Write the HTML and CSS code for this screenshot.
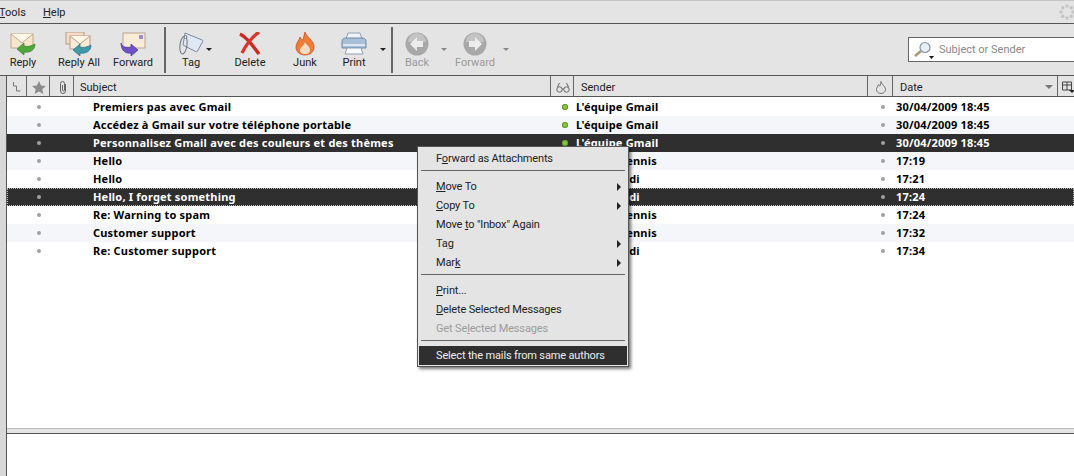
FILE: index.html
```html
<!DOCTYPE html>
<html>
<head>
    <title>Inbox</title>
    <link rel="stylesheet" href="styles.css">
</head>
<body>
    <!-- menu bar -->
    <div class="menubar">
        <span class="menu-tools"><u>T</u>ools</span>
        <span class="menu-help"><u>H</u>elp</span>
        <svg class="spinner" width="16" height="16" viewBox="0 0 16 16">
            <g fill="#c4c4c4">
                <circle cx="8" cy="2" r="1.8"/><circle cx="12.3" cy="3.7" r="1.8"/><circle cx="14" cy="8" r="1.8"/>
                <circle cx="12.3" cy="12.3" r="1.8"/><circle cx="8" cy="14" r="1.8"/><circle cx="3.7" cy="12.3" r="1.8"/>
                <circle cx="2" cy="8" r="1.8"/><circle cx="3.7" cy="3.7" r="1.8"/>
            </g>
        </svg>
    </div>

    <!-- toolbar -->
    <div class="toolbar">
        <div class="tool w-reply">
            <svg width="26" height="24" viewBox="0 0 26 24">
                <rect x="1" y="2" width="22" height="14" fill="#f6e6cc" stroke="#c2a98c"/>
                <path d="M1 2l11 9 11-9" fill="#fff6e6" stroke="#c2a98c"/>
                <path d="M25 12c0 6-5 9-11 8v3l-7-6 7-6v3c4 1 7 0 11-2z" fill="#4fa83a" stroke="#2f7d26" stroke-width=".7"/>
            </svg>
            <span>Reply</span>
        </div>
        <div class="tool w-replyall">
            <svg width="28" height="24" viewBox="0 0 28 24">
                <rect x="1" y="0" width="18" height="12" fill="#f4dcc8" stroke="#b89a86"/>
                <rect x="5" y="4" width="20" height="13" fill="#f8ecd8" stroke="#b89a86"/>
                <path d="M5 4l10 8 10-8" fill="#fff6e6" stroke="#b89a86"/>
                <path d="M26 13c0 6-5 9-11 8v3l-7-6 7-6v3c4 1 7 0 11-2z" fill="#3f9aa8" stroke="#28707c" stroke-width=".7"/>
            </svg>
            <span>Reply All</span>
        </div>
        <div class="tool w-forward">
            <svg width="26" height="24" viewBox="0 0 26 24">
                <rect x="3" y="1" width="22" height="15" fill="#f6ecd8" stroke="#b8a68e"/>
                <rect x="19" y="3" width="4" height="4" fill="#9c8cc8"/>
                <path d="M1 11c1 4 5 5 10 4v-3l7 6-7 6v-3c-6 1-10-3-10-10z" fill="#6f52c4" stroke="#4a3596" stroke-width=".7"/>
            </svg>
            <span>Forward</span>
        </div>
        <div class="tool-sep sep-first"></div>
        <div class="tool w-tag">
            <svg width="26" height="24" viewBox="0 0 26 24">
                <path d="M7 1l17 7c1 .5 1 1 .5 2l-5 9c-.5 1-1 1-2 .5L5 13z" fill="#dfe8f4" stroke="#7c8a9c"/>
                <ellipse cx="5.500" cy="13" rx="3.500" ry="9" fill="none" stroke="#6a7480" transform="rotate(8 5.500 13)"/>
                <circle cx="7.500" cy="5" r="1.400" fill="#fff" stroke="#6a7480"/>
            </svg>
            <span>Tag</span>
        </div>
        <div class="caret caret-tag"></div>
        <div class="tool w-delete">
            <svg width="22" height="24" viewBox="0 0 22 24">
                <path d="M1 2c6 3 10 8 19 20" fill="none" stroke="#c92a22" stroke-width="3.400"/>
                <path d="M20 0C13 5 8 11 3 21" fill="none" stroke="#d8362c" stroke-width="3.400"/>
            </svg>
            <span>Delete</span>
        </div>
        <div class="tool w-junk">
            <svg width="20" height="24" viewBox="0 0 20 24">
                <path d="M10 0c1 5 9 8 9 15 0 5-4 8-9 8s-9-3-9-8c0-4 3-6 4-10 1 2 2 3 3 3 1-3 1-5 2-8z" fill="#ef7d3a" stroke="#c9501e" stroke-width=".8"/>
                <path d="M10 10c1 3 5 4 5 8 0 3-2 4-5 4s-5-1-5-4c0-3 4-4 5-8z" fill="#fbdcc0"/>
            </svg>
            <span>Junk</span>
        </div>
        <div class="tool w-print">
            <svg width="26" height="24" viewBox="0 0 26 24">
                <path d="M7 1h12l2 6H5z" fill="#eef3f8" stroke="#8fa0b4"/>
                <path d="M1 9c0-2 2-3 4-3h16c2 0 4 1 4 3v7H1z" fill="#a9bfd8" stroke="#6f88a6"/>
                <path d="M2 13h22" stroke="#dfe8f2" stroke-width="2"/>
                <path d="M6 16h14l2 6H4z" fill="#f7f9fb" stroke="#8fa0b4"/>
            </svg>
            <span>Print</span>
        </div>
        <div class="caret caret-print"></div>
        <div class="tool-sep"></div>
        <div class="tool w-back disabled">
            <svg width="24" height="24" viewBox="0 0 24 24">
                <circle cx="12" cy="12" r="11.500" fill="#a8a8a8"/>
                <path d="M3 10a9 9 0 0 1 18 0z" fill="#c4c4c4"/>
                <path d="M12 5l-7 7 7 7v-4h6V9h-6z" fill="#ececec"/>
            </svg>
            <span>Back</span>
        </div>
        <div class="caret caret-back"></div>
        <div class="tool w-next disabled">
            <svg width="24" height="24" viewBox="0 0 24 24">
                <circle cx="12" cy="12" r="11.500" fill="#a8a8a8"/>
                <path d="M3 10a9 9 0 0 1 18 0z" fill="#c4c4c4"/>
                <path d="M12 5l7 7-7 7v-4H6V9h6z" fill="#ececec"/>
            </svg>
            <span>Forward</span>
        </div>
        <div class="caret caret-next"></div>
        <div class="search">
            <svg width="20" height="18" viewBox="0 0 20 18">
                <path d="M1 15l6-5" stroke="#a89a78" stroke-width="2.600"/>
                <circle cx="11" cy="6.500" r="5" fill="#e6eef6" stroke="#8a94a0" stroke-width="1.200"/>
                <path d="M15 15h5l-2.500 3z" fill="#111"/>
            </svg>
            <span>Subject or Sender</span>
        </div>
    </div>

    <!-- main area -->
    <div class="main">
        <div class="sidebar"></div>
        <div class="panes">
            <div class="list">
                <div class="head">
                    <div class="hcell h-thread">
                        <svg width="10" height="12" viewBox="0 0 10 12"><path d="M1.500 1v4h3v5h4" fill="none" stroke="#777"/></svg>
                    </div>
                    <div class="hcell h-star">
                        <svg width="14" height="13" viewBox="0 0 16 15"><path d="M8 0l2.400 5.200 5.600.6-4.200 3.800 1.200 5.400L8 12.200 3 15l1.200-5.400L0 5.800l5.600-.6z" fill="#8c8c8c"/></svg>
                    </div>
                    <div class="hcell h-clip">
                        <svg width="8" height="15" viewBox="0 0 8 15"><path d="M6.500 4v7a2.500 2.500 0 0 1-5 0V3.500a2 2 0 0 1 4 0V10a1 1 0 0 1-2 0V5" fill="none" stroke="#666"/></svg>
                    </div>
                    <div class="hcell h-subject">Subject</div>
                    <div class="hcell h-glass">
                        <svg width="14" height="11" viewBox="0 0 14 11"><g fill="none" stroke="#666"><circle cx="3.500" cy="7.500" r="2.700"/><circle cx="10.500" cy="7.500" r="2.700"/><path d="M6 7h2M1.500 5l2-4M12.500 5l-2-4"/></g></svg>
                    </div>
                    <div class="hcell h-sender">Sender</div>
                    <div class="hcell h-fire">
                        <svg width="10" height="13" viewBox="0 0 10 13"><path d="M5 .5c.5 3 4.500 4.500 4.500 8 0 2.500-2 4-4.500 4s-4.500-1.500-4.500-4c0-2 1.500-3 2-5 .5 1 1 1.500 1.500 1.500.5-1.500.5-3 1-4.500z" fill="none" stroke="#777"/></svg>
                    </div>
                    <div class="hcell h-date">Date<i class="sort"></i></div>
                    <div class="hcell h-pick">
                        <svg width="13" height="12" viewBox="0 0 13 12"><path d="M.5 1h9v8h-9zM.5 4h9M5 1v8" fill="none" stroke="#444"/><path d="M7 9h6l-3 3z" fill="#222"/></svg>
                    </div>
                </div>
                <div class="row"><i class="dot"></i><b>Premiers pas avec Gmail</b><i class="dot green"></i><b>L'équipe Gmail</b><i class="dot"></i><b>30/04/2009 18:45</b></div>
                <div class="row alt"><i class="dot"></i><b>Accédez à Gmail sur votre téléphone portable</b><i class="dot green"></i><b>L'équipe Gmail</b><i class="dot"></i><b>30/04/2009 18:45</b></div>
                <div class="row sel"><i class="dot"></i><b>Personnalisez Gmail avec des couleurs et des thèmes</b><i class="dot green"></i><b>L'équipe Gmail</b><i class="dot"></i><b>30/04/2009 18:45</b></div>
                <div class="row alt"><i class="dot"></i><b>Hello</b><i class="dot green"></i><b>Dennis Dennis</b><i class="dot"></i><b>17:19</b></div>
                <div class="row"><i class="dot"></i><b>Hello</b><i class="dot green"></i><b>Fred Freddi</b><i class="dot"></i><b>17:21</b></div>
                <div class="row sel focus"><i class="dot"></i><b>Hello, I forget something</b><i class="dot green"></i><b>Fred Freddi</b><i class="dot"></i><b>17:24</b></div>
                <div class="row"><i class="dot"></i><b>Re: Warning to spam</b><i class="dot green"></i><b>Dennis Dennis</b><i class="dot"></i><b>17:24</b></div>
                <div class="row alt"><i class="dot"></i><b>Customer support</b><i class="dot green"></i><b>Dennis Dennis</b><i class="dot"></i><b>17:32</b></div>
                <div class="row"><i class="dot"></i><b>Re: Customer support</b><i class="dot green"></i><b>Fred Freddi</b><i class="dot"></i><b>17:34</b></div>
            </div>
            <div class="splitter"></div>
            <div class="preview"></div>
        </div>
    </div>

    <!-- context menu -->
    <div class="ctx">
        <div class="item">F<u>o</u>rward as Attachments</div>
        <div class="ctx-sep"></div>
        <div class="item sub"><u>M</u>ove To</div>
        <div class="item sub"><u>C</u>opy To</div>
        <div class="item">Move <u>t</u>o "Inbox" Again</div>
        <div class="item sub">Ta<u>g</u></div>
        <div class="item sub">Mar<u>k</u></div>
        <div class="ctx-sep"></div>
        <div class="item"><u>P</u>rint...</div>
        <div class="item"><u>D</u>elete Selected Messages</div>
        <div class="item off">Get Se<u>l</u>ected Messages</div>
        <div class="ctx-sep sep-last"></div>
        <div class="item active">Select the mails from same authors</div>
    </div>
</body>
</html>
```

FILE: styles.css
```css
/* greys from the app theme */
:root {
    --panel: #e4e4e4;
    --line: #555555;
    --sel: #2f2f2f;
}

html, body {
    height: 100%;
}

body {
    margin: 0;
    height: 476px;
    overflow: hidden;
    position: relative;
    display: flex;
    flex-direction: column;
    background-color: var(--panel);
    color: #222;
    font-family: Roboto, sans-serif;
    font-size: 11px;
}

/* menu bar */
.menubar {
    height: 24px;
    box-sizing: border-box;
    border-top: 1px solid #c4c4c4;
    border-bottom: 1px solid var(--line);
    display: flex;
    align-items: center;
    position: relative;
}

.menu-tools {
    margin-left: -1px;
}

.menu-help {
    margin-left: 17px;
}

.spinner {
    margin-left: auto;
    margin-right: -1px;
}

/* toolbar */
.toolbar {
    height: 52px;
    box-sizing: border-box;
    border-bottom: 1px solid var(--line);
    display: flex;
    align-items: flex-start;
}

.tool {
    display: flex;
    flex-direction: column;
    align-items: center;
    height: 51px;
    padding-top: 8px;
    box-sizing: border-box;
    flex: none;
}

.tool svg {
    display: block;
}

.tool span {
    line-height: 14px;
}

.disabled span {
    color: #9a9a9a;
}

.w-reply { width: 46px; }
.w-replyall { width: 66px; }
.w-forward { width: 42px; }
.w-tag { width: 30px; margin-left: 10px; }
.w-delete { width: 68px; margin-left: 4px; }
.w-junk { width: 42px; }
.w-print { width: 56px; }
.w-back { width: 30px; margin-left: 9px; }
.w-next { width: 50px; }

.tool-sep {
    width: 2px;
    height: 46px;
    margin-top: 3px;
    background-color: #666;
    flex: none;
}

.sep-first {
    margin-left: 10px;
}

.caret {
    width: 0;
    height: 0;
    margin-top: 24px;
    border: 3px solid transparent;
    border-top-color: #222;
    border-bottom-width: 0;
    flex: none;
}

.caret-print { margin-left: -2px; margin-right: 5px; }
.caret-back { margin-left: 9px; margin-right: 3px; border-top-color: #888; }
.caret-next { margin-left: 3px; border-top-color: #888; }

.search {
    width: 175px;
    height: 25px;
    margin-top: 13px;
    margin-left: auto;
    margin-right: -9px;
    box-sizing: border-box;
    background-color: #fff;
    border: 1px solid #666;
    border-right: none;
    display: flex;
    align-items: center;
    padding-left: 5px;
    gap: 5px;
    color: #888;
    flex: none;
}

/* main area */
.main {
    flex: 1;
    display: flex;
    min-height: 0;
}

.sidebar {
    width: 6px;
    flex: none;
    background-color: #d8d8d8;
}

.panes {
    flex: 1;
    display: flex;
    flex-direction: column;
    min-width: 0;
    border-left: 1px solid var(--line);
}

.list {
    height: 352px;
    flex: none;
    background-color: #fff;
    overflow: hidden;
}

.head {
    height: 21px;
    box-sizing: border-box;
    margin-bottom: 1px;
    border-bottom: 1px solid var(--line);
    background-color: var(--panel);
    display: flex;
}

.hcell {
    flex: none;
    box-sizing: border-box;
    display: flex;
    align-items: center;
    justify-content: center;
    border-right: 1px solid #666;
    margin-right: 2px;
    padding-top: 2px;
}

.h-thread { width: 19px; margin-left: 1px; }
.h-star { width: 21px; }
.h-clip { width: 22px; }
.h-subject { width: 475px; justify-content: flex-start; padding-left: 4px; }
.h-glass { width: 21px; }
.h-sender { width: 292px; justify-content: flex-start; padding-left: 5px; }
.h-fire { width: 23px; }
.h-date { width: 163px; justify-content: flex-start; padding-left: 5px; }
.h-pick { width: 20px; border-right: none; justify-content: flex-start; padding-left: 2px; }

.sort {
    margin-left: auto;
    margin-right: 4px;
    border: 4px solid transparent;
    border-top-color: #777;
    border-bottom-width: 0;
}

/* message rows */
.row {
    height: 18px;
    display: grid;
    grid-template-columns: 86px 461px 22px 293px 27px 178px;
    align-items: center;
    color: #000;
    font-family: "Noto Sans", sans-serif;
    letter-spacing: 0.2px;
    line-height: 16px;
    white-space: nowrap;
}

.row b {
    overflow: hidden;
}

.alt {
    background-color: #f5f6fa;
}

.sel {
    background-color: var(--sel);
    color: #fff;
}

.focus {
    outline: 1px dotted #bbb;
    outline-offset: -1px;
}

.dot {
    width: 4px;
    height: 4px;
    border-radius: 50%;
    background-color: #a0a0a0;
    justify-self: center;
}

.row .dot:first-child {
    justify-self: start;
    margin-left: 30px;
}

.green {
    width: 6px;
    height: 6px;
    background-color: #8cc63a;
    box-shadow: inset 0 0 0 1px #5f9a2a;
}

.splitter {
    height: 6px;
    box-sizing: border-box;
    background-color: var(--panel);
    border-top: 1px solid #bdbdbd;
    border-bottom: 1px solid var(--line);
    flex: none;
}

.preview {
    flex: 1;
    background-color: #fff;
}

/* context menu, sits over the list */
.ctx {
    position: absolute;
    left: 417px;
    top: 146px;
    width: 212px;
    height: 221px;
    box-sizing: border-box;
    padding: 2px 1px 0 1px;
    background-color: var(--panel);
    border: 1px solid #555;
    box-shadow: 2px 2px 3px rgba(0, 0, 0, 0.55);
    color: #222;
    letter-spacing: -0.15px;
}

.item {
    height: 19px;
    line-height: 19px;
    padding-left: 17px;
    position: relative;
}

.sub::after {
    content: "";
    position: absolute;
    right: 6px;
    top: 6px;
    border: 4px solid transparent;
    border-left-color: #222;
    border-right-width: 0;
}

.off {
    color: #9c9c9c;
}

.active {
    background-color: var(--sel);
    color: #eee;
    line-height: 20px;
}

.ctx-sep {
    height: 1px;
    margin: 2px 2px 6px 2px;
    background-color: #666;
}

.sep-last {
    margin-bottom: 5px;
}
```
